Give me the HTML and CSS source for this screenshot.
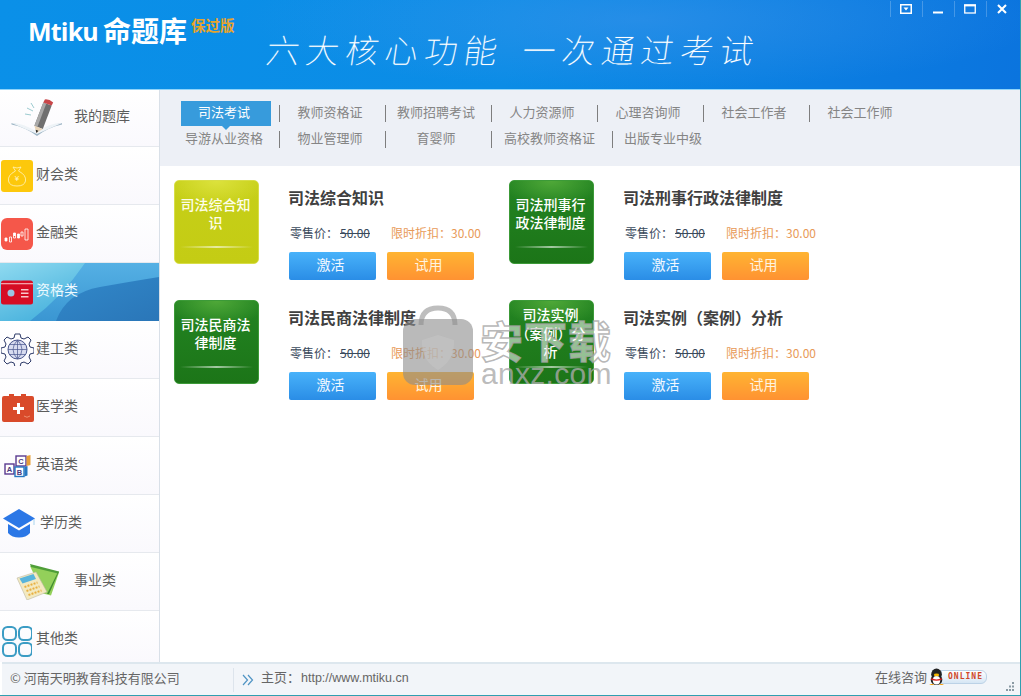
FILE: index.html
```html
<!DOCTYPE html>
<html lang="zh-CN">
<head>
<meta charset="utf-8">
<title>Mtiku 命题库</title>
<link rel="stylesheet" href="styles.css">
</head>
<body>
<div class="app">
  <header class="header">
    <div class="logo"><span class="logo-en">Mtiku</span><span class="logo-cn">命题库</span><span class="logo-tag">保过版</span></div>
    <div class="slogan"><span>六大核心功能</span><span class="slogan-b">一次通过考试</span></div>
    <div class="controls">
      <button class="ctl"><svg width="12" height="10" viewBox="0 0 12 10"><rect x=".75" y=".75" width="10.5" height="8.5" fill="none" stroke="#fff" stroke-width="1.5"/><path d="M3.5 3.5h5L6 6.500z" fill="#fff"/></svg></button>
      <button class="ctl"><svg width="12" height="10" viewBox="0 0 12 10"><rect x="1" y="7.500" width="10" height="2" fill="#fff"/></svg></button>
      <button class="ctl"><svg width="12" height="10" viewBox="0 0 12 10"><rect x=".75" y="1" width="10.5" height="8" fill="none" stroke="#fff" stroke-width="1.3"/><rect y=".4" width="12" height="2" fill="#fff"/></svg></button>
      <button class="ctl ctl-last"><svg width="10" height="10" viewBox="0 0 10 10"><path d="M1 1l8 8M9 1L1 9" stroke="#fff" stroke-width="2.100"/></svg></button>
    </div>
  </header>

  <div class="body">
    <nav class="side">
      <a class="side-row side-first">
        <span class="ic-wide"><svg width="54" height="38" viewBox="0 0 54 38"><path d="M.5 24q13 2 25.500 9.500q12-7.500 25-9.500v1.500q-14 3-25 11.500q-11-8.500-25.500-11.500z" fill="#9fb6c6"/><path d="M.5 24q12 0 25.500 9q12-9 25-9l-25 11z" fill="#eef3f7"/><path d="M23.400 26.800l8.900-23.400 8.400 3.200-8.900 23.400z" fill="#6f6f6f"/><path d="M23.400 26.800l8.900-23.400 3 1.100-8.900 23.400z" fill="#a8a8a8"/><path d="M32.300 3.400l1.500-3q4.500-.5 8.400 3.200l-1.500 3z" fill="#c8474a"/><path d="M23.400 26.800l8.400 3.200-6.300 4z" fill="#e8d4b8"/><path d="M24.600 30.800l2.700 1-1.800 2.200z" fill="#222"/><path d="M16 9l6 3M14 15l6 1M20 4l3 5" stroke="#9ccbd0" stroke-width="1"/></svg></span>
        <span class="label">我的题库</span>
      </a>
      <a class="side-row">
        <span class="ic"><svg width="32" height="32" viewBox="0 0 32 32"><rect width="32" height="32" rx="3" fill="#fdc80c"/><path d="M12 7q4 2 8 0l-2.500 4q8 4 7 10q-1 5-8.500 5t-8.500-5q-1-6 7-10z" fill="none" stroke="#fff4c0" stroke-width=".8"/><text x="16" y="21" text-anchor="middle" class="bag-yen">¥</text></svg></span>
        <span class="label">财会类</span>
      </a>
      <a class="side-row">
        <span class="ic"><svg width="32" height="32" viewBox="0 0 32 32"><rect width="32" height="32" rx="6" fill="#f5574a"/><path d="M4 20h2v3h-2zM8.500 19h2v5h-2zM12.500 15h2v5h-2zM16.500 16h2v4h-2zM20 14h2v4h-2zM24 11h3v11h-3z" fill="none" stroke="#fff" stroke-width=".8"/><path d="M4 20h2v3h-2zM16.500 16h2v4h-2zM12.500 15h2v3h-2z" fill="#fff"/></svg></span>
        <span class="label">金融类</span>
      </a>
      <a class="side-row active">
        <svg class="active-bg" width="159" height="58" viewBox="0 0 159 58" preserveAspectRatio="none"><defs><linearGradient id="a1" x1="0" y1="0" x2="1" y2="1"><stop offset="0" stop-color="#8fdaf0"/><stop offset=".6" stop-color="#4cb4de"/><stop offset="1" stop-color="#3ea6d8"/></linearGradient><linearGradient id="a2" x1="0" y1="0" x2="0" y2="1"><stop offset="0" stop-color="#55b0e4"/><stop offset="1" stop-color="#3a96d2"/></linearGradient><linearGradient id="a3" x1="0" y1="0" x2="1" y2="1"><stop offset="0" stop-color="#3289ca"/><stop offset="1" stop-color="#2a76b8"/></linearGradient></defs><rect width="159" height="58" fill="url(#a1)"/><path d="M85 0H159V58H30Q62 34 85 0z" fill="url(#a2)"/><path d="M56 58Q66 30 100 24T159 14V58z" fill="url(#a3)"/></svg>
        <span class="ic"><svg width="32" height="25" viewBox="0 0 32 25"><rect width="32" height="24" y=".5" rx="2.500" fill="#d60d24"/><rect y="3" width="32" height="1.300" fill="#f4a0a8"/><circle cx="10" cy="13" r="3.500" fill="#9bc5e4"/><path d="M20 9h7.500v1.500H20zM20 12.500h7.500V14H20zM20 16h7.500v1.500H20z" fill="#f8c8cc"/></svg></span>
        <span class="label">资格类</span>
      </a>
      <a class="side-row">
        <span class="ic"><svg width="33" height="33" viewBox="0 0 33 33"><path d="M14 1h5l1 4 3 1 4-2 3 3-2 4 1 3 4 1v5l-4 1-1 3 2 4-3 3-4-2-3 1-1 4h-5l-1-4-3-1-4 2-3-3 2-4-1-3-4-1v-5l4-1 1-3-2-4 3-3 4 2 3-1z" fill="none" stroke="#2d3a68" stroke-width="1"/><circle cx="16.500" cy="16.500" r="9.500" fill="#d8dcf0" stroke="#48558c" stroke-width="1"/><path d="M7 16.500h19M16.500 7v19M8.500 11.500h16M8.500 21.500h16M16.500 7q-9 9.500 0 19M16.500 7q9 9.500 0 19" fill="none" stroke="#48558c" stroke-width=".7"/></svg></span>
        <span class="label">建工类</span>
      </a>
      <a class="side-row">
        <span class="ic"><svg width="33" height="30" viewBox="0 0 33 30"><path d="M8 3V1h5v2h7V1h5v2h6q2 0 2 2v22q0 2-2 2H3q-2 0-2-2V5q0-2 2-2z" fill="#d94a2a"/><path d="M12 14h4v-4h3v4h4v3h-4v4h-3v-4h-4z" fill="#fff"/><path d="M23 23q3 2.500 6 0" fill="none" stroke="#f0a080" stroke-width=".8"/></svg></span>
        <span class="label">医学类</span>
      </a>
      <a class="side-row">
        <span class="ic ic-blocks"><svg width="28" height="24" viewBox="0 0 28 24"><rect x="12" y="2" width="10" height="10" fill="#fff" stroke="#5a3a90" stroke-width="1.400"/><path d="M22.500 2l4-1v10l-4 1z" fill="#e8a038"/><text x="17" y="10" text-anchor="middle" class="blk">C</text><rect x="1" y="10" width="9" height="10" fill="#fff" stroke="#5a3a90" stroke-width="1.400"/><text x="5.500" y="18" text-anchor="middle" class="blk">A</text><rect x="11" y="13" width="9" height="9.500" fill="#fff" stroke="#2878c0" stroke-width="1.400"/><path d="M20.500 13l3-1v9.500l-3 1z" fill="#2878c0"/><text x="15.500" y="21" text-anchor="middle" class="blk">B</text></svg></span>
        <span class="label">英语类</span>
      </a>
      <a class="side-row">
        <span class="ic ic-cap"><svg width="33" height="29" viewBox="0 0 33 29"><path d="M16 0l16 9.500L16 19 0 9.500z" fill="#2b77e6"/><path d="M5 15l11 6.500L27 15v9q-4 4.500-11 4.500T5 24z" fill="#2b77e6"/><path d="M31 10v6" stroke="#a8d4ee" stroke-width="1"/></svg></span>
        <span class="label">学历类</span>
      </a>
      <a class="side-row">
        <span class="ic-wide"><svg width="44" height="36" viewBox="0 0 44 36"><path d="M14 2l29 6.500-8 23-8-2z" fill="#93d05a"/><path d="M14 0l29 7.500-1 2L15 3z" fill="#4f9e38"/><path d="M33 30l10-22.500-1 .5-11 22z" fill="#3f8a30"/><path d="M1 14l19-6 11 20-20 8z" fill="#f3e9c0" stroke="#bdb9a4" stroke-width=".6"/><path d="M3.500 14.500l14-4.500 2.500 5-13.500 4.500z" fill="#58b4dc"/><path d="M8.500 23l13-4.500M10.500 27l13-4.500M12.500 31l13-4.500" stroke="#e8b040" stroke-width="2" stroke-dasharray="2 1.200"/></svg></span>
        <span class="label">事业类</span>
      </a>
      <a class="side-row side-last">
        <span class="ic"><svg width="31" height="31" viewBox="0 0 31 31"><g fill="none" stroke="#3b9cc4" stroke-width="2"><rect x="2" y="1" width="13" height="13" rx="4.500"/><rect x="18" y="1" width="13" height="13" rx="4.500"/><rect x="2" y="17" width="13" height="13" rx="4.500"/><rect x="18" y="17" width="13" height="13" rx="4.500"/></g></svg></span>
        <span class="label">其他类</span>
      </a>
    </nav>

    <main class="main">
      <div class="tabs">
        <div class="tab-row">
          <a class="tab tab-on">司法考试</a><i class="sep"></i>
          <a class="tab">教师资格证</a><i class="sep"></i>
          <a class="tab">教师招聘考试</a><i class="sep"></i>
          <a class="tab">人力资源师</a><i class="sep"></i>
          <a class="tab">心理咨询师</a><i class="sep"></i>
          <a class="tab">社会工作者</a><i class="sep"></i>
          <a class="tab">社会工作师</a>
        </div>
        <div class="tab-row tab-row-2">
          <a class="tab">导游从业资格</a><i class="sep"></i>
          <a class="tab">物业管理师</a><i class="sep"></i>
          <a class="tab">育婴师</a><i class="sep"></i>
          <a class="tab tab-wide">高校教师资格证</a><i class="sep"></i>
          <a class="tab tab-last">出版专业中级</a>
        </div>
      </div>

      <div class="cards">
        <article class="card">
          <div class="cover cover-lime"><span>司法综合知识</span></div>
          <div class="info">
            <h3 class="title">司法综合知识</h3>
            <p class="price"><span class="retail">零售价：</span><s class="old">50.00</s><span class="sale">限时折扣：30.00</span></p>
            <div class="btns"><button class="btn btn-blue">激活</button><button class="btn btn-orange">试用</button></div>
          </div>
        </article>
        <article class="card">
          <div class="cover"><span>司法刑事行政法律制度</span></div>
          <div class="info">
            <h3 class="title">司法刑事行政法律制度</h3>
            <p class="price"><span class="retail">零售价：</span><s class="old">50.00</s><span class="sale">限时折扣：30.00</span></p>
            <div class="btns"><button class="btn btn-blue">激活</button><button class="btn btn-orange">试用</button></div>
          </div>
        </article>
        <article class="card">
          <div class="cover"><span>司法民商法律制度</span></div>
          <div class="info">
            <h3 class="title">司法民商法律制度</h3>
            <p class="price"><span class="retail">零售价：</span><s class="old">50.00</s><span class="sale">限时折扣：30.00</span></p>
            <div class="btns"><button class="btn btn-blue">激活</button><button class="btn btn-orange">试用</button></div>
          </div>
        </article>
        <article class="card">
          <div class="cover"><span>司法实例（案例）分析</span></div>
          <div class="info">
            <h3 class="title title-case">司法实例（案例）分析</h3>
            <p class="price"><span class="retail">零售价：</span><s class="old">50.00</s><span class="sale">限时折扣：30.00</span></p>
            <div class="btns"><button class="btn btn-blue">激活</button><button class="btn btn-orange">试用</button></div>
          </div>
        </article>
      </div>
    </main>
  </div>

  <footer class="footer">
    <div class="copy">© 河南天明教育科技有限公司</div>
    <div class="home">
      <svg class="chev" width="12" height="12" viewBox="0 0 12 12"><path d="M1 1l4.500 5L1 11M6 1l4.500 5L6 11" fill="none" stroke="#4f94c4" stroke-width="1.200"/></svg>
      <span>主页：<span class="url">http://www.mtiku.cn</span></span>
    </div>
    <div class="online">
      <span>在线咨询</span>
      <svg class="qq" width="17" height="18" viewBox="0 0 16 17"><ellipse cx="8" cy="6" rx="5" ry="5.500" fill="#222"/><ellipse cx="8" cy="11" rx="5.500" ry="5" fill="#222"/><ellipse cx="8" cy="11.500" rx="3.500" ry="4" fill="#fff"/><ellipse cx="8" cy="6.500" rx="2.500" ry="1.300" fill="#f8b800"/><path d="M3 9.500q5 2.500 10 0v1.500q-5 2-10 0z" fill="#d82020"/><path d="M1 16q3-2 5 0zM10 16q3-2 5 0z" fill="#f8a000"/></svg>
      <span class="badge">ONLINE</span>
    </div>
    <svg class="grip" width="10" height="10" viewBox="0 0 10 10"><path d="M7 0h2v2H7zM4 3.500h2v2H4zM7 3.500h2v2H7zM1 7h2v2H1zM4 7h2v2H4zM7 7h2v2H7z" fill="#8a9aa4"/></svg>
  </footer>

  <div class="mark" aria-hidden="true">
    <svg class="mark-bag" width="72" height="80" viewBox="0 0 72 80"><path d="M19 20q0-17 17-17t17 17" fill="none" stroke="#a8a8a8" stroke-opacity=".75" stroke-width="5"/><rect x="1" y="14" width="70" height="66" rx="12" fill="#8c8c8c" fill-opacity=".6"/><path d="M36 30l16 5q1 20-16 30q-17-10-16-30z" fill="#c4c4c4" fill-opacity=".6"/></svg>
    <div class="mark-text">
      <div class="mark-cn">安下载</div>
      <div class="mark-en">anxz.com</div>
    </div>
  </div>
</div>
</body>
</html>
```

FILE: styles.css
```css
* { box-sizing: border-box; }
html, body { margin: 0; padding: 0; background: #fff; overflow: hidden; }
body { font-family: "Noto Sans CJK SC", "Liberation Sans", sans-serif; }
a { display: block; }
.app { position: relative; width: 1021px; height: 696px; display: flex; flex-direction: column; background: #fff; border-right: 1px solid #2f9fb0; border-bottom: 1px solid #2f9fb0; }

/* header */
.header { height: 90px; flex: none; display: flex; align-items: flex-start; border-bottom: 1px solid #8fd4fa; background: radial-gradient(ellipse 400px 70px at 640px 20px, rgba(70,150,235,.45), transparent), linear-gradient(100deg, #0a90e8 0%, #0b8ce6 50%, #0b74de 100%); color: #fff; }
.logo { margin: 12px 0 0 28px; width: 207px; height: 40px; display: flex; align-items: flex-start; white-space: nowrap; }
.logo-en { font: 700 25px/38px "Open Sans", "Liberation Sans", sans-serif; letter-spacing: -.8px; width: 75px; }
.logo-cn { font-size: 28px; line-height: 36px; font-weight: 700; width: 88px; }
.logo-tag { font-size: 14.500px; line-height: 16px; font-weight: 700; color: #e8a42c; margin-top: 5px; }
.slogan { margin: 25px 0 0 32px; display: flex; gap: 19px; font-size: 33px; line-height: 48px; font-weight: 100; letter-spacing: 6.500px; white-space: nowrap; transform: skewX(-8deg); text-shadow: 0 0 1px rgba(255,255,255,.5); }
.controls { margin-left: auto; display: flex; padding: 1px 0 0; }
.ctl { width: 32px; height: 16px; padding: 0 2px 0 0; background: none; border: 0; border-left: 1px solid rgba(255,255,255,.22); display: flex; align-items: center; justify-content: center; }
.ctl-last { width: 34px; padding-right: 4px; }

/* sidebar */
.body { flex: 1; display: flex; min-height: 0; }
.side { width: 160px; flex: none; border-right: 1px solid #d9e0e8; display: flex; flex-direction: column; background: linear-gradient(#fff, #fbfbfe); }
.side-row { height: 58px; flex: none; display: flex; align-items: center; padding-left: 1px; border-bottom: 1px solid #e6e9ee; font-size: 14px; color: #5c5c5c; background: linear-gradient(#fff, #faf9fd); position: relative; }
.side-first { height: 57px; }
.side-last { flex: 1; height: auto; border-bottom: 0; padding-top: 10px; }
.ic { width: 35px; flex: none; display: flex; align-items: center; position: relative; }
.ic-cap { width: 39px; padding-left: 2px; }
.ic-blocks { padding-left: 3px; }
.ic-wide { width: 73px; flex: none; display: flex; justify-content: center; }
.label { white-space: nowrap; position: relative; margin-top: -6px; }
.side-last .label { margin-top: -10px; }
.active { border-bottom: 0; color: #eefaff; background: none; }
.active-bg { position: absolute; left: 0; top: 0; width: 159px; height: 58px; }
.bag-yen { font: 400 8px "Liberation Sans", sans-serif; fill: #fff4c0; }
.blk { font: 700 7.500px "Liberation Sans", sans-serif; fill: #4a3a80; }

/* tabs */
.main { flex: 1; min-width: 0; }
.tabs { height: 76px; background: #edf0f6; padding: 11px 0 0 21px; }
.tab-row { display: flex; align-items: center; height: 25px; }
.tab-row-2 { margin-top: 1px; }
.tab { width: 90px; height: 25px; flex: none; padding: 0 4px 3px 0; text-align: center; font-size: 13px; line-height: 22px; color: #858585; white-space: nowrap; position: relative; }
.tab-on { background: #379bdc; color: #fff; }
.tab-on::after { content: ""; position: absolute; left: 41px; bottom: -4px; border: 4px solid transparent; border-bottom: 0; border-top-color: #379bdc; }
.tab-wide { width: 105px; }
.tab-last { width: 86px; padding-right: 0; }
.sep { width: 1px; height: 17px; margin: 0 7px 0 8px; background: #7e7e7e; flex: none; }

/* cards */
.cards { display: grid; grid-template-columns: 335px 335px; grid-auto-rows: 120px; padding: 14px 0 0 14px; }
.card { display: flex; gap: 30px; }
.cover { width: 85px; height: 84px; flex: none; border-radius: 5px; padding: 0 7px 18px 5px; display: flex; align-items: center; justify-content: center; text-align: center; position: relative; color: #fff; font-size: 14px; line-height: 18.500px; font-weight: 500; background: radial-gradient(ellipse 50px 26px at 50% 0, #4fa838, transparent), linear-gradient(#238422, #1c7518); border: 1px solid #3c9a38; overflow: hidden; }
.cover::after { content: ""; position: absolute; left: 5px; right: 5px; bottom: 15px; height: 2px; background: linear-gradient(90deg, transparent, rgba(255,255,255,.6), transparent); }
.cover-lime { color: #fdfde8; background: radial-gradient(ellipse 50px 26px at 50% 0, #dce23c, transparent), linear-gradient(#c6cf18, #c4cc14); border-color: #d8de48; }
.cover span { display: block; width: 72px; }
.info { width: 200px; }
.title { margin: 6px 0 0 -1px; font-size: 16px; line-height: 22px; font-weight: 700; color: #404040; white-space: nowrap; }
.price { margin: 15px 0 0 1px; font-size: 12px; line-height: 20px; display: flex; white-space: nowrap; }
.retail { color: #3a4a5c; width: 50px; }
.old { color: #3a4a5c; width: 51px; }
.sale { color: #e89a58; }
.btns { display: flex; gap: 11px; margin-top: 9px; }
.btn { width: 87px; height: 28px; padding: 0 4px 4px 0; border: 0; border-radius: 2px; color: #f2f8ff; font: 400 14px/24px "Noto Sans CJK SC", sans-serif; }
.btn-blue { background: linear-gradient(#48b2fa, #2a8de6); }
.btn-orange { background: linear-gradient(#ffb432, #ff9232); color: #fff4e0; }

/* footer */
.footer { height: 33px; flex: none; margin-left: 2px; display: flex; align-items: center; border-top: 2px solid #dde7ee; background: #f2f5f9; font-size: 13px; color: #666; white-space: nowrap; }
.copy { width: 232px; padding-left: 8px; height: 24px; line-height: 20px; border-right: 1px solid #dde4ec; }
.home { margin-left: 8px; display: flex; align-items: center; gap: 7px; line-height: 20px; margin-top: -5px; }
.chev { margin-top: 6px; }
.url { font: 12.500px "Liberation Sans", sans-serif; margin-left: 1px; }
.online { margin-left: auto; display: flex; align-items: center; font-size: 13px; line-height: 20px; margin-top: -5px; }
.qq { margin: 0 0 0 1px; position: relative; }
.badge { width: 46px; height: 14px; margin-left: -4px; padding-left: 3px; font: 700 8px/12px "DejaVu Sans Mono", monospace; letter-spacing: 1px; color: #d0482a; text-align: center; border-radius: 0 6px 6px 0; background: linear-gradient(#fff, #d6e6f4); border: 1px solid #bcd2e6; }
.grip { margin: 15px 5px 0 18px; }

/* watermark */
.mark { position: absolute; left: 402px; top: 305px; display: flex; gap: 6px; pointer-events: none; }
.mark-text { margin-top: 12px; }
.mark-cn { font-size: 43px; line-height: 44px; font-weight: 700; letter-spacing: 1px; color: rgba(255,255,255,.55); -webkit-text-stroke: 1.500px rgba(165,165,165,.8); white-space: nowrap; }
.mark-en { font: 400 30px/24px "Liberation Sans", sans-serif; color: rgba(170,170,170,.8); letter-spacing: .3px; margin-top: 1px; margin-left: 1px; }
```
